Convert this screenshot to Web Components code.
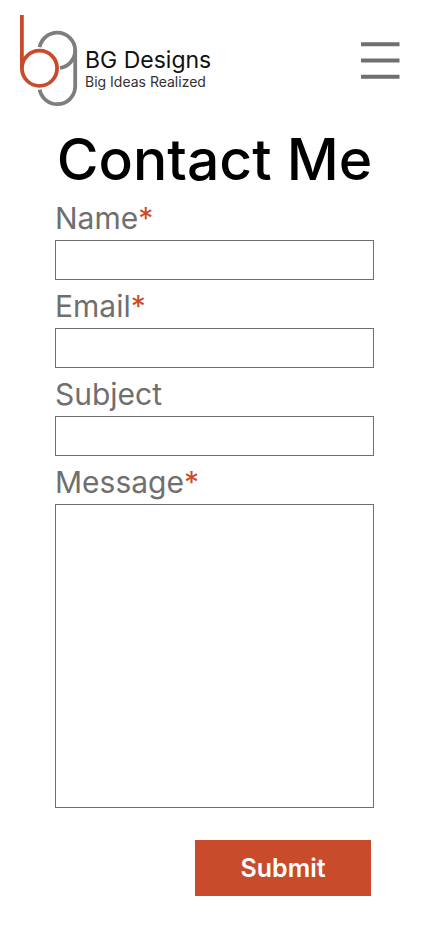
<!DOCTYPE html>
<html lang="en">
<head>
<meta charset="utf-8">
<meta name="viewport" content="width=device-width, initial-scale=1">
<title>Contact Me - BG Designs</title>
<style>
:root { --accent: #c84c2b; --grey: #6f6f6f; }
body { margin: 0; background: #fff; font-family: Inter, "Open Sans", sans-serif; }
</style>
</head>
<body>
<contact-page></contact-page>
<script>
function define(name, html) {
  const template = document.createElement('template');
  template.innerHTML = html;
  customElements.define(name, class extends HTMLElement {
    constructor() {
      super();
      this.attachShadow({ mode: 'open' }).append(template.content.cloneNode(true));
    }
  });
}

define('brand-logo', `
<style>
:host { display: block; }
a { display: flex; align-items: center; gap: 7px; color: #111; text-decoration: none; }
svg { display: block; flex: none; }
.words { display: flex; flex-direction: column; padding-top: 18px; white-space: nowrap; }
.name { font-size: 23px; line-height: 23px; }
.tag { font-size: 14px; line-height: 20px; color: #333; }
</style>
<a href="#">
<svg width="58" height="92" viewBox="20 15 58 92" fill="none" stroke-width="3.8" aria-hidden="true">
<g stroke="#7d7f7e">
<path d="M39.6 47.2A18 18 0 0 1 57.3 32.7A17.9 17.9 0 0 1 75.2 50.3V86.6A17.9 17.9 0 0 1 57.3 104.2A18 18 0 0 1 39.6 89.7"/>
<path d="M75.2 50.3A17.6 17.6 0 0 1 60 67.8"/>
</g>
<g stroke="#c84c2b"><path d="M21.9 15V68.3"/><circle cx="39.5" cy="68.3" r="17.6"/></g>
</svg>
<span class="words"><span class="name">BG Designs</span><span class="tag">Big Ideas Realized</span></span>
</a>`);

define('menu-button', `
<style>
:host { display: block; }
button { display: block; padding: 0; border: 0; background: none; color: var(--grey); cursor: pointer; }
svg { display: block; }
</style>
<button type="button" aria-label="Open menu">
<svg width="40" height="38" viewBox="0 0 40 38" stroke="currentColor" stroke-width="4"><path d="M1 2.3H39.5M1 18.5H39.5M1 34.7H39.5"/></svg>
</button>`);

define('site-header', `
<style>
:host { display: block; }
header { display: flex; justify-content: space-between; align-items: center; padding: 15px 28px 0 20px; }
</style>
<header><brand-logo></brand-logo><menu-button></menu-button></header>`);

customElements.define('form-field', class extends HTMLElement {
  connectedCallback() {
    if (this.shadowRoot) return;
    const type = this.getAttribute('type') || 'text';
    const required = this.hasAttribute('required');
    const attrs = 'id="control"' + (required ? ' required' : '');
    this.attachShadow({ mode: 'open' }).innerHTML = `
<style>
:host { display: block; }
label { display: block; font-size: 30px; line-height: 36px; padding-bottom: 4px; color: var(--grey); }
.star { color: var(--accent); }
input, textarea { display: block; box-sizing: border-box; width: 100%; height: 40px; margin: 0; padding: 4px 8px;
  border: 1px solid var(--grey); border-radius: 0; background: #fff; font: inherit; font-size: 20px; resize: none; }
textarea { height: 304px; }
</style>
<label for="control"><slot></slot>${required ? '<span class="star">*</span>' : ''}</label>
${type === 'textarea' ? `<textarea ${attrs}></textarea>` : `<input type="${type}" ${attrs}>`}`;
  }
});

define('submit-button', `
<style>
:host { display: flex; justify-content: flex-end; }
button { width: 176px; height: 56px; padding: 0; border: 0; background: var(--accent); color: #fff;
  font: inherit; font-size: 25px; font-weight: 600; cursor: pointer; }
</style>
<button type="submit"><slot></slot></button>`);

define('contact-page', `
<style>
:host { display: block; }
main { padding: 21px 54px 29px 55px; }
h1 { margin: 0 0 8px; font-size: 57px; line-height: 64px; font-weight: 500; color: #000; text-align: center; white-space: nowrap; }
form { display: flex; flex-direction: column; gap: 8px; }
submit-button { margin: 24px 3px 0 0; }
</style>
<site-header></site-header>
<main>
<h1>Contact Me</h1>
<form>
<form-field required>Name</form-field>
<form-field type="email" required>Email</form-field>
<form-field>Subject</form-field>
<form-field type="textarea" required>Message</form-field>
<submit-button>Submit</submit-button>
</form>
</main>`);
</script>
</body>
</html>
